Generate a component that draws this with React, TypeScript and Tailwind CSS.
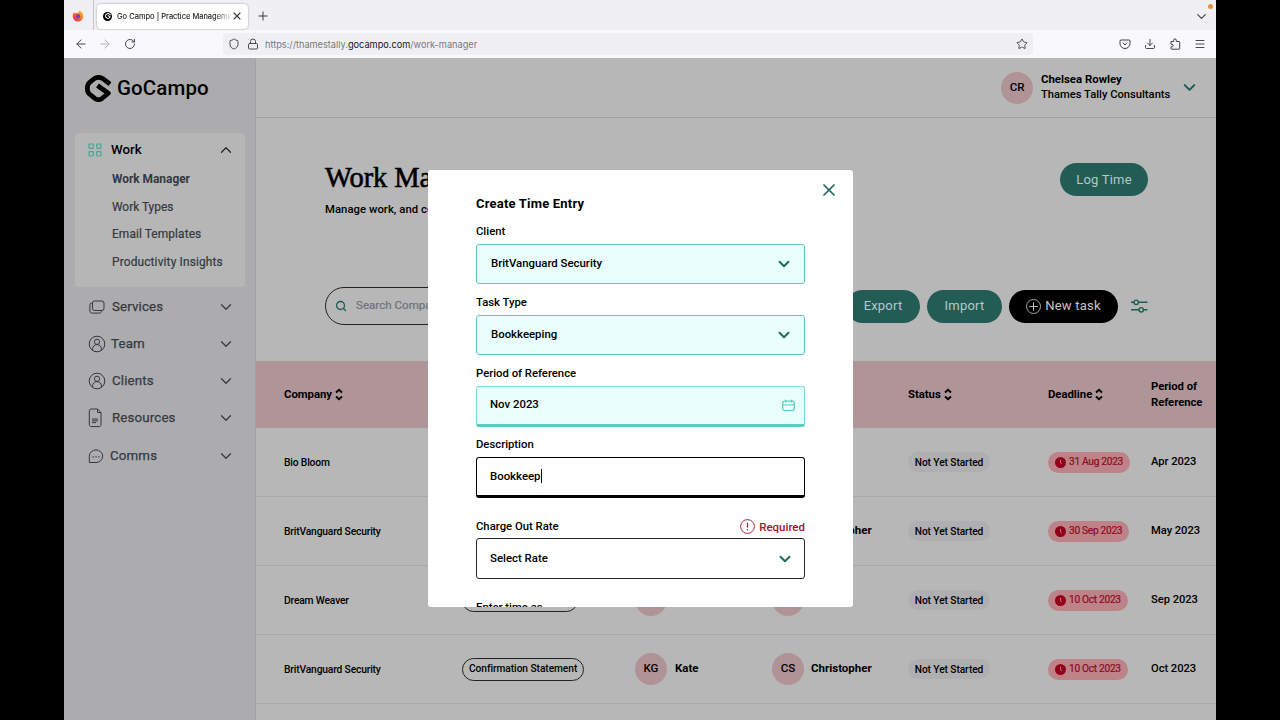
import React from 'react';
import {
  ArrowLeft,
  ArrowRight,
  ChevronDown,
  ChevronUp,
  Download,
  Lock,
  Menu,
  Plus,
  RotateCw,
  Search,
  Shield,
  Star,
  X,
} from 'lucide-react';

interface TaskRow {
  company: string;
  task: string;
  pillClass?: string;
  assignee: string;
  status: string;
  deadline: string;
  period: string;
}

const ROWS: TaskRow[] = [
  { company: 'Bio Bloom', task: 'Bookkeeping', assignee: 'Chris', status: 'Not Yet Started', deadline: '31 Aug 2023', period: 'Apr 2023' },
  { company: 'BritVanguard Security', task: 'Bookkeeping', assignee: 'Christopher', status: 'Not Yet Started', deadline: '30 Sep 2023', period: 'May 2023' },
  { company: 'Dream Weaver', task: '', pillClass: 'w-[116px]', assignee: 'Chris', status: 'Not Yet Started', deadline: '10 Oct 2023', period: 'Sep 2023' },
  { company: 'BritVanguard Security', task: 'Confirmation Statement', assignee: 'Christopher', status: 'Not Yet Started', deadline: '10 Oct 2023', period: 'Oct 2023' },
];

const GRID = 'grid grid-cols-[178px_173px_137px_136px_140px_103px_1fr] items-center pl-7';

const LogoMark = ({ className, stroke = 'currentColor' }: { className?: string; stroke?: string }) => (
  <svg viewBox="0 0 80 80" fill="none" stroke={stroke} strokeWidth="14" className={className}>
    <path d="M74 27 L53 11 Q40 3 27 11 L14 22 Q7 28 7 38 V42 Q7 51 14 57 L29 69 Q40 77 51 69 L69 54 L37 31" strokeLinejoin="round" />
  </svg>
);

const UserIcon = () => (
  <svg viewBox="0 0 18 18" fill="none" stroke="currentColor" strokeWidth="1" className="h-[18px] w-[18px]">
    <circle cx="9" cy="9" r="7.8" />
    <circle cx="9" cy="6.8" r="2.6" />
    <path d="M4.6 15.2v-1.4c0-2.4 1.9-4.2 4.4-4.2s4.4 1.8 4.4 4.2v1.4" />
  </svg>
);

const ServicesIcon = () => (
  <svg viewBox="0 0 18 18" fill="none" stroke="currentColor" strokeWidth="1" className="h-[18px] w-[18px]">
    <rect x="4.5" y="3" width="11.5" height="9.5" rx="2" />
    <path d="M4.5 5h-.8A1.900 1.900 0 0 0 1.900 7v6.200c0 1.100.8 1.900 1.900 1.900h7.600c1.300 0 2.100-.9 2.100-2.600" />
  </svg>
);

const ResourcesIcon = () => (
  <svg viewBox="0 0 18 20" fill="none" stroke="currentColor" strokeWidth="1" className="h-5 w-[18px]">
    <path d="M9.500 1H3.200A1.900 1.900 0 0 0 1.300 2.900v13.800c0 1.100.8 1.900 1.900 1.900h7.900c1.100 0 1.900-.8 1.900-1.900V4.500L9.500 1zM9.500 1v3.500H13" />
    <path d="M4 11h6M4 12.800h6M4 14.600h4" />
  </svg>
);

const CommsIcon = () => (
  <svg viewBox="0 0 18 18" fill="none" stroke="currentColor" strokeWidth="1" className="h-[18px] w-[18px]">
    <path d="M1.300 15.500V9.200a6.700 6.300 0 1 1 6.700 6.300z" />
    <path d="M4.600 9.800h1.200M7.500 9.800h1.200M10.400 9.800h1.200" strokeWidth="1.300" />
  </svg>
);

const SortIcon = () => (
  <svg viewBox="0 0 8 13" fill="none" stroke="currentColor" strokeWidth="1.900" className="h-[13px] w-2">
    <path d="M1 4.500 4 1.700l3 2.800M1 8.500l3 2.800 3-2.800" />
  </svg>
);

const GridIcon = () => (
  <svg viewBox="0 0 14 14" fill="none" stroke="#45a694" strokeWidth="1.200" className="h-3.5 w-3.5">
    <rect x="1" y="1" width="4.300" height="4.300" rx="0.800" />
    <rect x="8.700" y="1" width="4.300" height="4.300" rx="0.800" />
    <rect x="1" y="8.700" width="4.300" height="4.300" rx="0.800" />
    <rect x="8.700" y="8.700" width="4.300" height="4.300" rx="0.800" />
  </svg>
);

const FirefoxIcon = () => (
  <svg viewBox="0 0 12 12" className="h-3 w-3">
    <defs>
      <linearGradient id="ff" x1="1" y1="0" x2="0.200" y2="1">
        <stop offset="0" stopColor="#ffd23c" />
        <stop offset="0.500" stopColor="#ff7a2a" />
        <stop offset="1" stopColor="#e0245e" />
      </linearGradient>
    </defs>
    <path d="M7.500.500C9.800 1.600 11.500 3.800 11.300 6.300A5.300 5.300 0 0 1 .700 6.200C.700 4.500 1.300 3.200 2 2.300c.2.400.5.700.9.900C4 2.600 5 2.500 6 3 6.500 2.200 7 1.500 7.500.500z" fill="url(#ff)" />
    <circle cx="6" cy="6.300" r="2.200" fill="#7a3bc2" />
  </svg>
);

const Avatar = ({ initials }: { initials: string }) => (
  <div className="flex h-8 w-8 shrink-0 items-center justify-center rounded-full bg-[#b09397] text-[11.500px] font-medium">
    {initials}
  </div>
);

const BrowserChrome = () => (
  <div className="shrink-0">
    <div className="flex h-[30px] items-center bg-[#f0f0f4] text-[#3a3a40]">
      <div className="flex h-full w-[30px] items-center justify-center border-r border-[#c4c4ca] pr-px pt-0.5">
        <FirefoxIcon />
      </div>
      <div className="ml-[3px] mt-0.5 flex h-[25px] w-[151px] items-center rounded bg-white pl-[6px] shadow-[0_0_2px_rgba(0,0,0,0.4)]">
        <div className="flex h-[9px] w-[9px] shrink-0 items-center justify-center rounded-full bg-black">
          <LogoMark className="h-[6px] w-[6px]" stroke="white" />
        </div>
        <div className="ml-[5px] w-[115px] overflow-hidden whitespace-nowrap pt-px font-[Inter] text-[7.500px] text-[#15141a] [-webkit-text-stroke:0.1px] [mask-image:linear-gradient(to_right,black_85%,transparent)]">
          Go Campo | Practice Management
        </div>
        <X className="-ml-px h-3 w-3 shrink-0" strokeWidth={2.200} />
      </div>
      <Plus className="ml-2 mt-0.5 h-3.5 w-3.5" strokeWidth={1.700} />
      <div className="ml-auto flex items-start">
        <ChevronDown className="mt-[2px] h-[15px] w-[15px]" strokeWidth={1.700} />
        <div className="mr-[3px] -mt-[3px] -ml-px h-[5px] w-[5px] rounded-full bg-[#e0953a]" />
      </div>
    </div>
    <div className="flex h-7 items-center bg-[#f9f9fb] text-[#3f3f46]">
      <ArrowLeft className="ml-2.5 h-3.5 w-3.5" strokeWidth={1.700} />
      <ArrowRight className="ml-2.5 h-3.5 w-3.5 text-[#b0b0b6]" strokeWidth={1.700} />
      <RotateCw className="ml-3 h-3 w-3" strokeWidth={1.900} />
      <div className="ml-[87px] flex h-[22px] w-[810px] items-center rounded bg-[#f0f0f4] pl-[5px]">
        <Shield className="h-3 w-3" strokeWidth={1.900} />
        <Lock className="ml-[7px] h-3 w-3" strokeWidth={1.900} />
        <div className="ml-[6px] mt-px whitespace-nowrap font-[Inter] text-[9.200px] text-[#77777d]">
          https://thamestally.<span className="text-[#15141a]">gocampo.com</span>/work-manager
        </div>
        <Star className="ml-auto mr-[5px] h-3 w-3" strokeWidth={1.900} />
      </div>
      <div className="ml-auto mr-[10px] flex items-center gap-[13px]">
        <svg viewBox="0 0 12 12" fill="none" stroke="currentColor" strokeWidth="1" className="h-3 w-3">
          <path d="M2 2h8a1 1 0 0 1 1 1v2.500a5 5 0 0 1-10 0V3a1 1 0 0 1 1-1zM3.800 4.800 6 6.900l2.200-2.100" />
        </svg>
        <Download className="h-3 w-3" strokeWidth={1.900} />
        <svg viewBox="0 0 12 12" fill="none" stroke="currentColor" strokeWidth="1" strokeLinejoin="round" className="h-3 w-3">
          <path d="M2 3.500h2.700V2.200a1.300 1.300 0 0 1 2.600 0v1.300H10a.7.7 0 0 1 .7.700v6.300a.7.7 0 0 1-.7.700H2.700a.7.7 0 0 1-.7-.7V8.800h.9a1.200 1.200 0 0 0 0-2.500H2z" />
        </svg>
        <Menu className="h-3 w-3" strokeWidth={1.900} />
      </div>
    </div>
  </div>
);

interface NavItemProps {
  icon: React.ReactNode;
  label: string;
  className: string;
}

const NavItem = ({ icon, label, className }: NavItemProps) => (
  <div className={`flex items-center pr-5 text-[13.300px] text-[#34393f] ${className}`}>
    {icon}
    <span className="flex-1 pl-[6px] tracking-[0.150px] [-webkit-text-stroke:0.25px]">{label}</span>
    <ChevronDown className="h-[18px] w-[18px]" strokeWidth={1.600} />
  </div>
);

const Sidebar = () => (
  <aside className="w-[192px] shrink-0 border-r border-[#a2a2a4] bg-[#acacae]">
    <div className="flex h-[60px] items-center pl-[21px]">
      <LogoMark className="h-[27px] w-[27px]" />
      <span className="ml-[5px] text-[20.500px] font-medium tracking-[0.100px]">GoCampo</span>
    </div>
    <div className="ml-[11px] mt-[15px] h-[154px] w-[170px] rounded-[3px] bg-[#b6b6b7]">
      <div className="flex h-[33px] items-center pl-[13px] pr-[10px]">
        <GridIcon />
        <span className="ml-[9px] flex-1 text-[13.300px] font-medium">Work</span>
        <ChevronUp className="h-[18px] w-[18px] text-[#222]" strokeWidth={1.600} />
      </div>
      <ul className="pl-[37px] text-[11.900px] leading-[27.700px] text-[#34393f]">
        <li className="font-bold">Work Manager</li>
        <li className="[-webkit-text-stroke:0.2px]">Work Types</li>
        <li className="tracking-[0.100px] [-webkit-text-stroke:0.2px]">Email Templates</li>
        <li className="tracking-[0.150px] [-webkit-text-stroke:0.2px]">Productivity Insights</li>
      </ul>
    </div>
    <nav className="pl-6">
      <NavItem icon={<ServicesIcon />} label="Services" className="h-10" />
      <NavItem icon={<UserIcon />} label="Team" className="h-[34px] [&>span]:pl-[5px]" />
      <NavItem icon={<UserIcon />} label="Clients" className="h-[39px]" />
      <NavItem icon={<ResourcesIcon />} label="Resources" className="h-9" />
      <NavItem icon={<CommsIcon />} label="Comms" className="h-[39px] [&>span]:pl-[4px]" />
    </nav>
  </aside>
);

const PillButton = ({ className, children }: { className: string; children: React.ReactNode }) => (
  <button className={`flex h-[33px] items-center justify-center rounded-full text-[13px] tracking-[0.200px] ${className}`}>
    {children}
  </button>
);

const MainPanel = () => (
  <main className="min-w-0 flex-1 bg-[#b7b7b7]">
    <header className="flex h-[60px] items-center justify-end border-b border-[#9f9f9f] pr-[17px]">
      <Avatar initials="CR" />
      <div className="ml-2 w-[139px] text-[11.400px]">
        <div className="-mt-px font-bold leading-4">Chelsea Rowley</div>
        <div className="whitespace-nowrap text-[11.200px] font-medium leading-4">Thames Tally Consultants</div>
      </div>
      <ChevronDown className="h-[19px] w-[19px] text-[#1f5c53]" strokeWidth={2.600} />
    </header>

    <section className="h-[243px] pl-[69px] pr-[68px]">
      <div className="flex h-[118px] justify-between pt-[43px]">
        <div className="whitespace-nowrap pt-px">
          <h1 className="font-['Liberation_Serif',serif] text-[28.500px] leading-8 tracking-[-0.100px] [-webkit-text-stroke:0.6px]">Work Manager</h1>
          <p className="mt-[8px] text-[11.300px] font-medium leading-4 tracking-[0.050px]">Manage work, and collaborate</p>
        </div>
        <PillButton className="mt-0.5 w-[88px] bg-[#235c55] text-[#b4c9c6]">Log Time</PillButton>
      </div>
      <div className="mt-[51px] flex items-center">
        <div className="flex h-[38px] w-[300px] items-center rounded-full border border-[#222] pl-[9px]">
          <Search className="h-3 w-3 text-[#1f5c53]" strokeWidth={2.600} />
          <span className="ml-[9px] whitespace-nowrap text-[11.500px] tracking-[0.050px] text-[#6d7278] [-webkit-text-stroke:0.2px]">Search Company</span>
        </div>
        <PillButton className="ml-auto w-[74px] bg-[#235c55] text-[#b4c9c6]">Export</PillButton>
        <PillButton className="ml-[7px] w-[75px] bg-[#235c55] text-[#b4c9c6]">Import</PillButton>
        <PillButton className="ml-[7px] w-[109px] bg-black text-[#c4c4c4]">
          <span className="mr-1 flex h-[15px] w-[15px] items-center justify-center rounded-full border border-[#a8a8a8]">
            <Plus className="h-[13px] w-[13px]" strokeWidth={1.800} />
          </span>
          New task
        </PillButton>
        <svg viewBox="0 0 18 14" fill="none" stroke="#1f5c53" strokeWidth="1.400" className="ml-3 h-3.5 w-[18px]">
          <path d="M1 3.300h3M8.400 3.300H17.500M1 10.800h8M13.400 10.800H17.500" />
          <circle cx="6.200" cy="3.300" r="2.200" />
          <circle cx="11.200" cy="10.800" r="2.200" />
        </svg>
      </div>
    </section>

    <div className={`${GRID} h-[67px] bg-[#b09598] text-[11.400px] font-bold tracking-[-0.050px]`}>
      <div className="flex items-center gap-[3px]">Company <SortIcon /></div>
      <div />
      <div />
      <div />
      <div className="flex items-center gap-[3px]">Status <SortIcon /></div>
      <div className="flex items-center gap-[3px]">Deadline <SortIcon /></div>
      <div className="text-[11.300px] leading-4">Period of<br />Reference</div>
    </div>
    {ROWS.map((row, i) => (
      <div key={i} className={`${GRID} h-[69px] border-b border-[#a9a9a9] text-[11.500px]`}>
        <div className="whitespace-nowrap pt-px text-[10.300px] font-medium tracking-[-0.180px]">{row.company}</div>
        <div className="flex">
          <span className={`flex h-[23px] items-center justify-center whitespace-nowrap rounded-full border border-[#222] px-1.5 text-[10.200px] font-medium tracking-[-0.060px] ${row.pillClass ?? ''}`}>
            {row.task}
          </span>
        </div>
        <div className="flex items-center gap-2 font-bold"><Avatar initials="KG" />Kate</div>
        <div className="flex items-center gap-[7px] font-bold"><Avatar initials="CS" />{row.assignee}</div>
        <div className="flex">
          <span className="flex h-5 w-[82px] items-center justify-center whitespace-nowrap rounded-full bg-[#afafb2] pt-px text-[10.200px] font-medium tracking-[-0.080px]">{row.status}</span>
        </div>
        <div className="flex">
          <span className="flex h-[21px] items-center gap-[3px] whitespace-nowrap rounded-full bg-[#bd8388] px-[7px] text-[10.200px] tracking-[-0.300px] text-[#8e0a20] [-webkit-text-stroke:0.2px]">
            <svg viewBox="0 0 11 11" className="h-[11px] w-[11px]">
              <circle cx="5.500" cy="5.500" r="5.500" fill="#930019" />
              <path d="M5.500 2.800v3.100l1.300.8" fill="none" stroke="#bd8388" strokeWidth="0.900" />
            </svg>
            {row.deadline}
          </span>
        </div>
        <div className="whitespace-nowrap text-[11.200px] font-medium tracking-[-0.050px]">{row.period}</div>
      </div>
    ))}
  </main>
);

const FIELD = 'flex items-center justify-between rounded-[3px] text-[11.400px]';

const TimeEntryModal = () => (
  <div className="absolute left-[364px] top-[170px] h-[437px] w-[425px] overflow-hidden rounded-[3px] bg-white px-12 text-[11.300px] font-medium text-black">
    <X className="absolute right-[14px] top-[10px] h-5 w-5 text-[#1f6b60]" strokeWidth={2.100} />
    <h2 className="pt-[24px] text-[13px] font-bold leading-5 tracking-[0.200px]">Create Time Entry</h2>

    <label className="mt-[10px] block leading-4">Client</label>
    <div className={`${FIELD} mt-[4px] h-10 border-[1.500px] border-[#5cc8bb] bg-[#e8fffe] pl-3.5 pr-[11px]`}>
      BritVanguard Security
      <ChevronDown className="h-[18px] w-[18px] text-[#1f6b60]" strokeWidth={2.600} />
    </div>

    <label className="mt-[11px] block leading-4">Task Type</label>
    <div className={`${FIELD} mt-[4px] h-10 border-[1.500px] border-[#5cc8bb] bg-[#e8fffe] pl-3.5 pr-[11px]`}>
      Bookkeeping
      <ChevronDown className="h-[18px] w-[18px] text-[#1f6b60]" strokeWidth={2.600} />
    </div>

    <label className="mt-[11px] block leading-4">Period of Reference</label>
    <div className={`${FIELD} mt-[4px] h-[41px] border border-b-[3px] border-[#7fdcd2] border-b-[#58cdbf] bg-[#e8fffe] pb-px pl-[13px] pr-[9px]`}>
      Nov 2023
      <svg viewBox="0 0 13 13" fill="none" stroke="#55cbbd" strokeWidth="1.200" className="h-[13px] w-[13px]">
        <rect x="0.700" y="2.200" width="11.600" height="9.300" rx="2" />
        <path d="M.7 6h11.600M3.700.800v2.600M9.300.800v2.600" />
      </svg>
    </div>

    <label className="mt-[10px] block leading-4">Description</label>
    <div className={`${FIELD} mt-[4px] h-[41px] border border-b-[3px] border-black pb-[2px] pl-[13px]`}>
      <span className="border-r border-black leading-[14px]">Bookkeep</span>
    </div>

    <div className="mt-[21px] flex justify-between leading-4">
      <label>Charge Out Rate</label>
      <span className="flex items-center gap-1 text-[#a3132b]">
        <svg viewBox="0 0 15 15" fill="none" stroke="currentColor" strokeWidth="0.900" className="-mt-px h-[15px] w-[15px]">
          <circle cx="7.500" cy="7.500" r="6.900" />
          <path d="M7.500 3.800v4.600M7.500 10v1.300" strokeWidth="1.200" />
        </svg>
        <span className="text-[11.500px]">Required</span>
      </span>
    </div>
    <div className={`${FIELD} mt-[3px] h-[41px] border border-[#26262c] pl-[13px] pr-[10px]`}>
      Select Rate
      <ChevronDown className="h-[18px] w-[18px] text-[#1f6b60]" strokeWidth={2.600} />
    </div>

    <label className="mt-[21px] block leading-4">Enter time as</label>
  </div>
);

export default function App() {
  return (
    <div className="flex h-[720px] w-[1280px] justify-center overflow-hidden bg-black font-[Roboto,sans-serif] text-black">
      <div className="relative flex h-full w-[1152px] flex-col overflow-hidden">
        <BrowserChrome />
        <div className="flex min-h-0 flex-1 overflow-hidden">
          <Sidebar />
          <MainPanel />
        </div>
        <TimeEntryModal />
      </div>
    </div>
  );
}
